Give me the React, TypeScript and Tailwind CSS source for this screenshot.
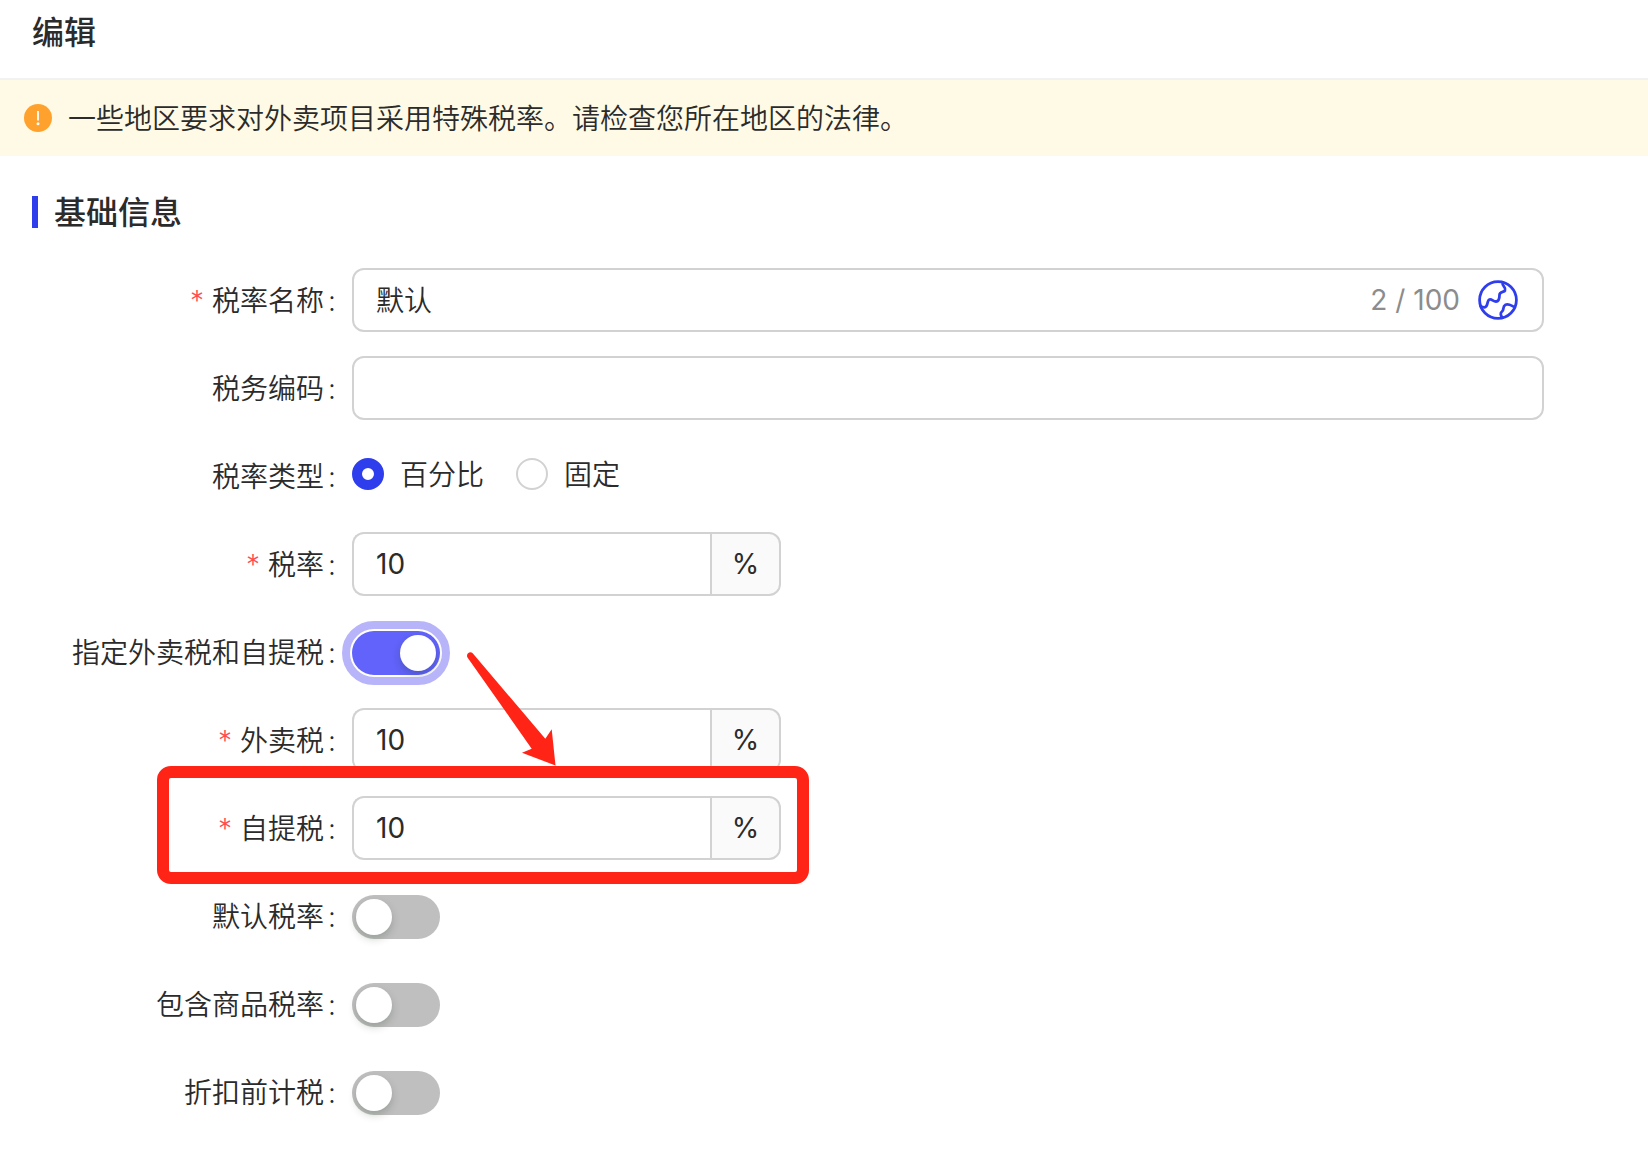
import { useState } from 'react';
import type { ReactNode } from 'react';

interface FieldProps {
  label: string;
  htmlFor?: string;
  required?: boolean;
  children: ReactNode;
}

function Field({ label, htmlFor, required, children }: FieldProps) {
  return (
    <div className="flex min-h-16">
      <label
        htmlFor={htmlFor}
        className="flex w-80 shrink-0 items-center justify-end pt-0.5 pr-4 font-[350] whitespace-nowrap"
      >
        {required && <span className="mr-2 font-light text-[#ff4d4f]">*</span>}
        {label}
        <span className="ml-1">:</span>
      </label>
      <div className="flex min-w-0 flex-1 items-center">{children}</div>
    </div>
  );
}

interface PercentInputProps {
  id: string;
  highlighted?: boolean;
}

function PercentInput({ id, highlighted }: PercentInputProps) {
  const [value, setValue] = useState('10');

  return (
    <div className="relative flex h-16 w-[429px]">
      <input
        id={id}
        type="text"
        inputMode="decimal"
        value={value}
        onChange={(e) => setValue(e.target.value)}
        className="min-w-0 flex-1 rounded-l-xl border-2 border-r-0 border-[#d2d2d2] bg-white px-[22px] outline-none"
      />
      <span className="flex w-[71px] items-center justify-center rounded-r-xl border-2 border-[#d2d2d2] bg-[#fafafa]">
        %
      </span>
      {highlighted && (
        <div className="pointer-events-none absolute -top-[30px] -right-7 -bottom-6 -left-[195px] rounded-[14px] border-12 border-[#ff2416]" />
      )}
    </div>
  );
}

interface SwitchProps {
  id: string;
  defaultChecked?: boolean;
}

function Switch({ id, defaultChecked = false }: SwitchProps) {
  const [checked, setChecked] = useState(defaultChecked);

  return (
    <button
      id={id}
      type="button"
      role="switch"
      aria-checked={checked}
      onClick={() => setChecked(!checked)}
      className={`mt-0.5 flex h-11 w-[88px] rounded-full p-1 ${
        checked
          ? 'justify-end bg-[#6163fa] outline-8 outline-offset-2 outline-[#b8b4f9]'
          : 'justify-start bg-[#bfbfbf]'
      }`}
    >
      <span className="size-9 rounded-full bg-white shadow-[0_4px_8px_rgba(0,35,11,0.2)]" />
    </button>
  );
}

interface RadioProps {
  label: string;
  value: string;
  defaultChecked?: boolean;
}

function Radio({ label, value, defaultChecked }: RadioProps) {
  return (
    <label className="flex items-center gap-4 font-[350]">
      <input
        type="radio"
        name="taxType"
        value={value}
        defaultChecked={defaultChecked}
        className="size-8 appearance-none rounded-full border-2 border-[#d2d2d2] bg-white checked:border-10 checked:border-[#2f3eed]"
      />
      <span className="pt-0.5">{label}</span>
    </label>
  );
}

function GlobeIcon() {
  return (
    <svg
      viewBox="0 0 40 40"
      className="size-10"
      fill="none"
      stroke="#2f3eed"
      strokeWidth="2.8"
      strokeLinecap="round"
      strokeLinejoin="round"
    >
      <circle cx="20" cy="20" r="18.4" />
      <path d="M24.500 2.500C24 6.500 28.500 7 27 10.500C26 12.500 21.500 11 21.500 15C21.500 18 21.500 21.500 18 21.500C15 21.500 14 18.800 11.500 19.500C8.500 20.500 10.500 27 6.500 27.300C4.500 27.500 3.500 26.500 2.500 26" />
      <path d="M24.500 37.500C22.500 35.500 22 33 24 31.500C26.500 30 24 26.500 27.500 24.700C31 23.500 33 25.500 36.500 27" />
    </svg>
  );
}

function WarningIcon() {
  return (
    <svg viewBox="0 0 28 28" className="size-7 shrink-0">
      <circle cx="14" cy="14" r="14" fill="#ffa22d" />
      <path d="M13.100 7h1.800v9.500h-1.800z" fill="#fff" />
      <circle cx="14" cy="19.700" r="1.500" fill="#fff" />
    </svg>
  );
}

function Arrow() {
  return (
    <svg
      viewBox="0 0 92 116"
      className="pointer-events-none absolute top-[30px] left-28 z-10 h-[116px] w-[92px]"
      fill="#ff2416"
    >
      <path d="M3.500 7.500C1.500 4 6 0.500 8.700 3.300L81.300 88.700L87.700 79.300L91.500 115.500L58 102.700L67.700 98.700Z" />
    </svg>
  );
}

export default function App() {
  const [name, setName] = useState('默认');

  return (
    <div className="bg-white pb-8 font-['Inter','Noto_Sans_CJK_SC',sans-serif] text-[28px] leading-11 text-[#2b2b2b]">
      <header className="flex h-20 items-start border-b-2 border-[#f2f2f4] px-8 pt-2">
        <h1 className="pt-px text-[32px] leading-12 font-medium">编辑</h1>
      </header>

      <div role="alert" className="flex h-[76px] items-center gap-4 bg-[#fffae5] px-6">
        <WarningIcon />
        <p className="pt-0.5 font-[350]">
          一些地区要求对外卖项目采用特殊税率。请检查您所在地区的法律。
        </p>
      </div>

      <form className="px-8 pt-8">
        <h2 className="flex h-12 items-center gap-4 text-[32px] leading-12 font-medium">
          <span className="h-8 w-1.5 bg-[#2f3eed]" />
          <span className="pt-0.5">基础信息</span>
        </h2>

        <div className="mt-8 flex flex-col gap-6 pr-[72px]">
          <Field label="税率名称" htmlFor="name" required>
            <div className="flex h-16 flex-1 items-center rounded-xl border-2 border-[#d2d2d2] pr-6 pl-[22px]">
              <input
                id="name"
                type="text"
                maxLength={100}
                value={name}
                onChange={(e) => setName(e.target.value)}
                className="min-w-0 flex-1 pt-0.5 font-[350] outline-none"
              />
              <span className="text-[#8c8c8c]">{`${name.length} / 100`}</span>
              <button type="button" aria-label="多语言" className="ml-[18px]">
                <GlobeIcon />
              </button>
            </div>
          </Field>

          <Field label="税务编码" htmlFor="code">
            <input
              id="code"
              type="text"
              className="h-16 min-w-0 flex-1 rounded-xl border-2 border-[#d2d2d2] px-[22px] outline-none"
            />
          </Field>

          <Field label="税率类型">
            <div role="radiogroup" aria-label="税率类型" className="flex gap-8 pb-1">
              <Radio label="百分比" value="percent" defaultChecked />
              <Radio label="固定" value="fixed" />
            </div>
          </Field>

          <Field label="税率" htmlFor="rate" required>
            <PercentInput id="rate" />
          </Field>

          <Field label="指定外卖税和自提税" htmlFor="separate">
            <div className="relative flex h-16 items-center">
              <Switch id="separate" defaultChecked />
              <Arrow />
            </div>
          </Field>

          <Field label="外卖税" htmlFor="takeout" required>
            <PercentInput id="takeout" />
          </Field>

          <Field label="自提税" htmlFor="pickup" required>
            <PercentInput id="pickup" highlighted />
          </Field>

          <Field label="默认税率" htmlFor="isDefault">
            <Switch id="isDefault" />
          </Field>

          <Field label="包含商品税率" htmlFor="included">
            <Switch id="included" />
          </Field>

          <Field label="折扣前计税" htmlFor="beforeDiscount">
            <Switch id="beforeDiscount" />
          </Field>
        </div>
      </form>
    </div>
  );
}
